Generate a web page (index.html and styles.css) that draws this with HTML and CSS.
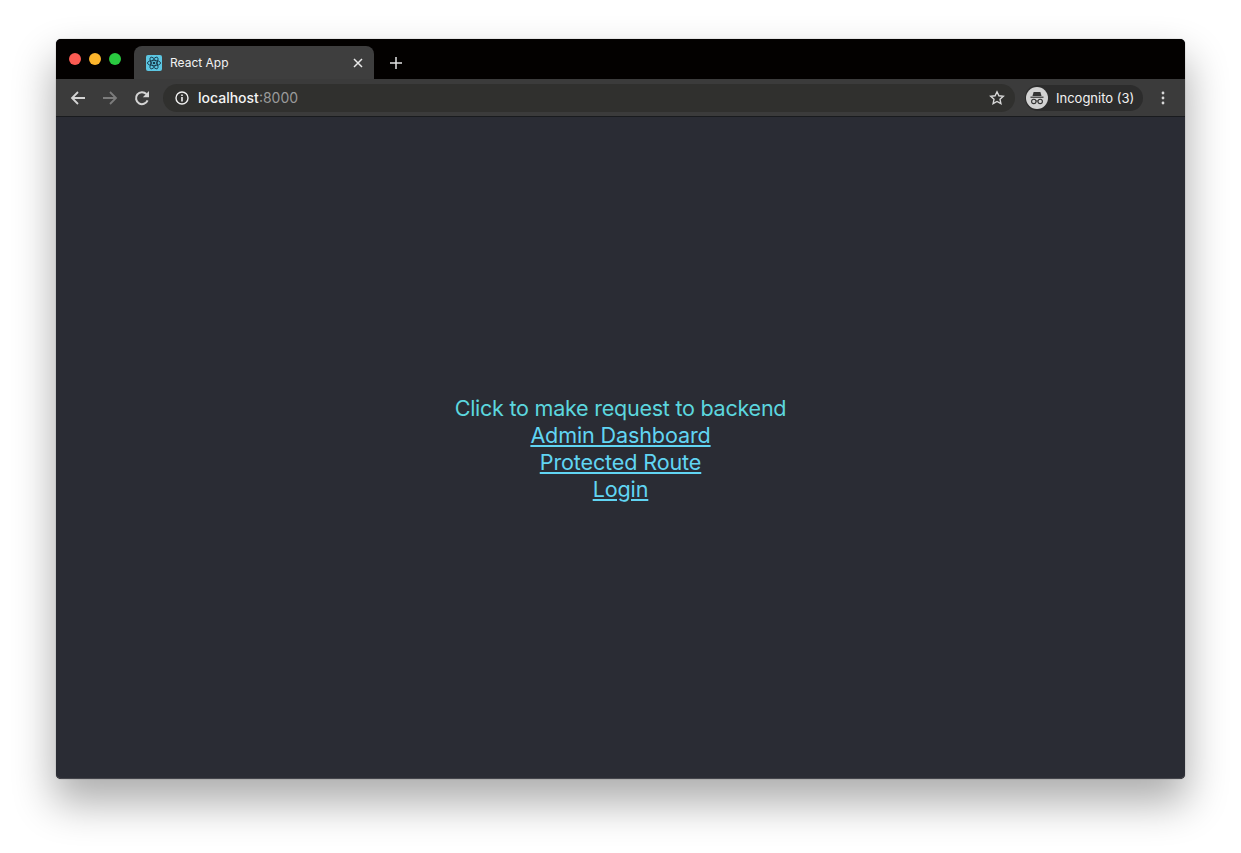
FILE: index.html
```html
<!DOCTYPE html>
<html lang="en">
<head>
<meta charset="utf-8">
<title>React App</title>
<link rel="stylesheet" href="styles.css">
</head>
<body>
<div class="window">
  <div class="tabstrip">
    <div class="lights">
      <span class="light red"></span>
      <span class="light yellow"></span>
      <span class="light green"></span>
    </div>
    <div class="tab">
      <span class="favicon">
        <svg viewBox="0 0 18 18" width="18" height="18" fill="none" stroke="#17384a" stroke-width="1">
          <ellipse cx="9" cy="9" rx="7.4" ry="3"/>
          <ellipse cx="9" cy="9" rx="7.4" ry="3" transform="rotate(60 9 9)"/>
          <ellipse cx="9" cy="9" rx="7.4" ry="3" transform="rotate(120 9 9)"/>
          <circle cx="9" cy="9" r="1.5" fill="#17384a" stroke="none"/>
        </svg>
      </span>
      <span class="tab-title">React App</span>
      <svg class="tab-close" viewBox="0 0 10 10" width="10" height="10" fill="none" stroke="#e8e8e8" stroke-width="1.5">
        <path d="M1 1l8 8M9 1l-8 8"/>
      </svg>
    </div>
    <svg class="newtab" viewBox="0 0 12 12" width="12" height="12" fill="none" stroke="#e2e2e2" stroke-width="1.5">
      <path d="M6 0v12M0 6h12"/>
    </svg>
  </div>
  <div class="toolbar">
    <svg class="nav" viewBox="0 0 16 16" width="16" height="16" fill="none" stroke="#d4d4d4" stroke-width="1.8">
      <path d="M15 8H2M8 2L2 8l6 6"/>
    </svg>
    <svg class="nav" viewBox="0 0 16 16" width="16" height="16" fill="none" stroke="#7c7c7c" stroke-width="1.8">
      <path d="M1 8h13M8 2l6 6-6 6"/>
    </svg>
    <svg class="nav" viewBox="0 0 16 16" width="16" height="16" fill="none" stroke="#d4d4d4" stroke-width="2">
      <path d="M13.6 10.4A6 6 0 1 1 12.4 4"/>
      <path d="M15 1v6.2H8.8z" fill="#d4d4d4" stroke="none"/>
    </svg>
    <div class="omnibox">
      <svg class="info" viewBox="0 0 14 14" width="14" height="14">
        <circle cx="7" cy="7" r="6" fill="none" stroke="#f0f0f0" stroke-width="1.4"/>
        <path d="M6.2 6h1.6v4.4H6.2zM6.2 3.4h1.6V5H6.2z" fill="#f0f0f0"/>
      </svg>
      <span class="host">localhost</span><span class="port">:8000</span>
      <svg class="star" viewBox="0 0 16 16" width="16" height="16" fill="none" stroke="#d8d8d8" stroke-width="1.4">
        <path d="M8 1.8l1.9 4 4.4.5-3.3 3 .9 4.4L8 11.5l-3.9 2.2.9-4.4-3.3-3 4.4-.5z"/>
      </svg>
    </div>
    <div class="profile">
      <span class="avatar">
        <svg viewBox="0 0 22 22" width="22" height="22" fill="#333">
          <path d="M7.6 5h6.8l1.1 4H6.5z"/>
          <path d="M4.5 9.6h13v1.2h-13z"/>
          <g fill="none" stroke="#333" stroke-width="1.1">
            <circle cx="7.8" cy="14.4" r="2.2"/>
            <circle cx="14.2" cy="14.4" r="2.2"/>
            <path d="M10 14h2"/>
          </g>
        </svg>
      </span>
      <span class="profile-name">Incognito (3)</span>
    </div>
    <svg class="menu" viewBox="0 0 4 14" width="4" height="14" fill="#d8d8d8">
      <circle cx="2" cy="2" r="1.4"/>
      <circle cx="2" cy="7" r="1.4"/>
      <circle cx="2" cy="12" r="1.4"/>
    </svg>
  </div>
  <main class="app">
    <div class="app-text">Click to make request to backend</div>
    <a class="app-link" href="#admin">Admin Dashboard</a>
    <a class="app-link" href="#protected">Protected Route</a>
    <a class="app-link" href="#login">Login</a>
  </main>
</div>
</body>
</html>
```
FILE: styles.css
```css
* { box-sizing: border-box; }
html, body { margin: 0; height: 100%; }
body {
  background: #fff;
  padding: 39px 56px 74px;
  font-family: Inter, "Liberation Sans", sans-serif;
  overflow: hidden;
}
.window {
  height: 740px;
  display: flex;
  flex-direction: column;
  border-radius: 5px;
  background: #2a2c34;
  box-shadow: 0 0 1px rgba(0,0,0,.6), 0 22px 42px 2px rgba(0,0,0,.32);
}
.tabstrip {
  height: 40px;
  flex: none;
  display: flex;
  align-items: flex-end;
  background: #030100;
  border-radius: 5px 5px 0 0;
  padding-left: 13px;
}
.lights { display: flex; gap: 8px; align-self: flex-start; margin-top: 14px; }
.light { width: 12px; height: 12px; border-radius: 50%; }
.red { background: #fb5b52; }
.yellow { background: #fcb52b; }
.green { background: #2ac940; }
.tab {
  width: 240px;
  height: 33px;
  margin-left: 13px;
  background: #3e3e3e;
  border-radius: 8px 8px 0 0;
  display: flex;
  align-items: center;
  padding: 0 11px 0 12px;
}
.favicon {
  width: 16px;
  height: 16px;
  background: #5cc6e2;
  border-radius: 2px;
  display: flex;
  align-items: center;
  justify-content: center;
  overflow: hidden;
}
.tab-title { margin-left: 8px; font-size: 12px; color: #f2f2f2; flex: 1; }
.newtab { margin: 0 0 10px 16px; }
.toolbar {
  height: 38px;
  flex: none;
  display: flex;
  align-items: center;
  background: #3b3b3b;
  border-bottom: 1px solid #191b1e;
  padding: 0 20px 0 14px;
}
.nav { margin-right: 16px; flex: none; }
.omnibox {
  flex: 1;
  height: 28px;
  margin-left: -3px;
  background: #30302e;
  border-radius: 14px;
  display: flex;
  align-items: center;
  padding: 0 10px 0 12px;
  font-size: 14px;
}
.info { margin-right: 9px; }
.host { color: #f4f4f4; font-weight: 500; }
.port { color: #9a9a9a; }
.star { margin-left: auto; }
.profile {
  width: 118px;
  height: 26px;
  margin-left: 10px;
  background: #2c2c2c;
  border-radius: 13px;
  display: flex;
  align-items: center;
  padding-left: 1px;
}
.avatar {
  width: 22px;
  height: 22px;
  border-radius: 50%;
  background: #d2d2d2;
  flex: none;
}
.avatar svg { display: block; }
.profile-name { margin-left: 8px; font-size: 13px; color: #f2f2f2; white-space: nowrap; }
.menu { margin-left: 18px; flex: none; }
.app {
  flex: 1;
  display: flex;
  flex-direction: column;
  align-items: center;
  justify-content: center;
  padding-top: 2px;
  font-size: 21.6px;
  line-height: 27px;
  background: #2a2c34;
  border-radius: 0 0 5px 5px;
  box-shadow: inset 0 -1px 0 #44454b;
}
.app-text { color: #5cd6de; letter-spacing: -.28px; }
.app-link { color: #61d5f3; letter-spacing: -.15px; }
```
